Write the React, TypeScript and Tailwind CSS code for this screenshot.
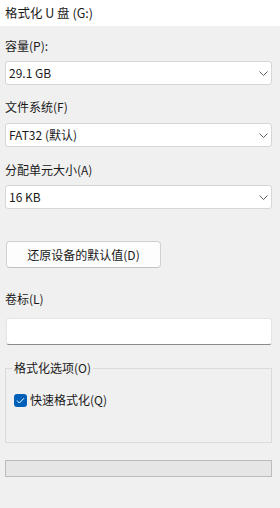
import React from "react";

const font = { fontFamily: '"Noto Sans CJK SC", "Noto Sans", sans-serif' };

function Chevron() {
  return (
    <svg width="9" height="5" viewBox="0 0 9 5" className="text-[#5f5f5f]">
      <path d="M0.5 0.5 L4.5 4.5 L8.5 0.5" fill="none" stroke="currentColor" strokeWidth="1" />
    </svg>
  );
}

function Select({ value }: { value: string }) {
  return (
    <div className="ml-[5px] mr-[8px] h-[24px] bg-white border border-[#d6d6d6] rounded-[3px] flex items-center justify-between pl-[3px] pr-[3px]">
      <span className="text-[12px] leading-[16px] text-[#1a1a1a]">{value}</span>
      <Chevron />
    </div>
  );
}

export default function App() {
  return (
    <div style={font} className="w-[280px] h-[508px] bg-[#f0f0f0] flex flex-col">
      <div className="h-[26px] bg-white flex items-center pl-[5px] text-[12.5px] text-[#1a1a1a] shrink-0">
        格式化 U 盘 (G:)
      </div>
      <div className="pl-[5px] mt-[12px] mb-[7px] text-[12px] leading-[16px] text-[#1a1a1a]">容量(P):</div>
      <Select value="29.1 GB" />
      <div className="pl-[5px] mt-[14px] mb-[8px] text-[12px] leading-[16px] text-[#1a1a1a]">文件系统(F)</div>
      <Select value="FAT32 (默认)" />
      <div className="pl-[5px] mt-[15px] mb-[7px] text-[12px] leading-[16px] text-[#1a1a1a]">分配单元大小(A)</div>
      <Select value="16 KB" />
      <div className="mt-[32px] ml-[6px] w-[155px] h-[27px] bg-[#fdfdfd] border border-[#d0d0d0] border-b-[#c2c2c2] rounded-[4px] flex items-center justify-center text-[12px] text-[#1a1a1a]">
        还原设备的默认值(D)
      </div>
      <div className="pl-[5px] mt-[23px] mb-[11px] text-[12px] leading-[16px] text-[#1a1a1a]">卷标(L)</div>
      <div className="ml-[6px] mr-[8px] h-[27px] bg-white border border-[#e5e5e5] border-b-[#8a8a8a] rounded-[3px]"></div>
      <div className="relative ml-[5px] mr-[8px] mt-[23px] h-[75px] border border-[#dadada]">
        <div className="absolute left-[6px] top-[-9px] px-[2px] bg-[#f0f0f0] text-[12px] leading-[16px] text-[#1a1a1a]">
          格式化选项(O)
        </div>
        <div className="flex items-center mt-[23px] ml-[8px] gap-[3px]">
          <div className="w-[13px] h-[13px] rounded-[3px] bg-[#005fb8] flex items-center justify-center">
            <svg width="9" height="7" viewBox="0 0 9 7">
              <path d="M1 3.6 L3.4 6 L8 1.2" fill="none" stroke="white" strokeWidth="1" />
            </svg>
          </div>
          <span className="text-[12px] leading-[16px] text-[#1a1a1a]">快速格式化(Q)</span>
        </div>
      </div>
      <div className="ml-[5px] mr-[8px] mt-[17px] h-[17px] bg-[#e6e6e6] border border-[#bcbcbc]"></div>
    </div>
  );
}
